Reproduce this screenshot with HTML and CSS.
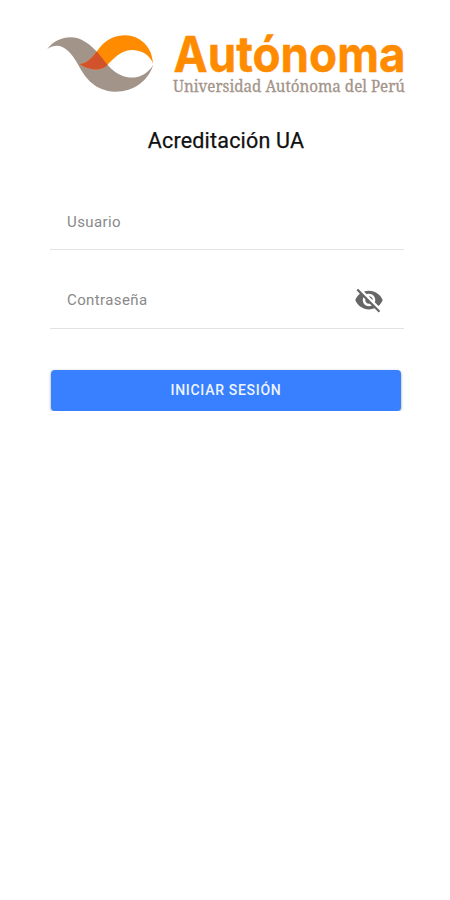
FILE: index.html
```html
<!DOCTYPE html>
<html lang="es">
<head>
<meta charset="utf-8">
<title>Acreditación UA</title>
<link rel="stylesheet" href="styles.css">
</head>
<body>
<main class="login">
  <svg class="logo" viewBox="0 0 370 75" role="img" aria-label="Autónoma">
    <defs>
      <clipPath id="wave"><path d="M22 72C50 35 100 27 135 50C168 70 185 98 205 122C235 154 262 160 288 157C315 151 330 135 340 119C325 165 285 200 225 200C165 198 136 160 115 120C90 74 60 46 22 72Z"/></clipPath>
    </defs>
    <g transform="scale(.33333)">
      <path class="taupe" d="M22 72C50 35 100 27 135 50C168 70 185 98 205 122C235 154 262 160 288 157C315 151 330 135 340 119C325 165 285 200 225 200C165 198 136 160 115 120C90 74 60 46 22 72Z"/>
      <path class="orange" d="M118 117C148 116 163 88 180 67C215 24 268 24 298 43C325 60 337 85 339 116C330 90 305 75 275 75C240 77 220 102 200 122C180 139 145 136 118 117Z"/>
      <path class="red" clip-path="url(#wave)" d="M118 117C148 116 163 88 180 67C215 24 268 24 298 43C325 60 337 85 339 116C330 90 305 75 275 75C240 77 220 102 200 122C180 139 145 136 118 117Z"/>
    </g>
    <text class="wordmark" x="133.5" y="47" textLength="232" lengthAdjust="spacingAndGlyphs">Autónoma</text>
    <text class="tagline" x="133" y="67.3" textLength="232" lengthAdjust="spacingAndGlyphs">Universidad Autónoma del Perú</text>
  </svg>
  <h1 class="title">Acreditación UA</h1>
  <form class="form">
    <div class="field">
      <input class="input" type="text" placeholder="Usuario" aria-label="Usuario">
    </div>
    <div class="field">
      <input class="input" type="password" placeholder="Contraseña" aria-label="Contraseña">
      <svg class="eye" viewBox="0 0 24 24"><path d="M12 7c2.76 0 5 2.24 5 5 0 .65-.13 1.26-.36 1.83l2.92 2.92c1.51-1.26 2.7-2.89 3.43-4.75-1.73-4.39-6-7.5-11-7.5-1.4 0-2.74.25-3.98.7l2.16 2.16C10.74 7.13 11.35 7 12 7zM2 4.27l2.28 2.28.46.46C3.08 8.3 1.78 10.02 1 12c1.73 4.39 6 7.5 11 7.5 1.55 0 3.03-.3 4.38-.84l.42.42L19.73 22 21 20.73 3.27 3 2 4.27zM7.53 9.8l1.55 1.55c-.05.21-.08.43-.08.65 0 1.66 1.34 3 3 3 .22 0 .44-.03.65-.08l1.55 1.55c-.67.33-1.41.53-2.2.53-2.76 0-5-2.24-5-5 0-.79.2-1.53.53-2.2zm4.31-.78l3.15 3.15.02-.16c0-1.66-1.34-3-3-3l-.17.01z"/></svg>
    </div>
    <button class="submit" type="button">INICIAR SESIÓN</button>
  </form>
</main>
</body>
</html>
```
FILE: styles.css
```css
* { box-sizing: border-box; }
body {
  margin: 0;
  background: #fff;
  font-family: Roboto, sans-serif;
}
.login { padding: 25px 46px 0 50px; }
.logo {
  display: block;
  width: 370px;
  height: 75px;
  margin-left: -10px;
  overflow: visible;
}
.taupe { fill: #a3948a; }
.orange { fill: #ff8c00; }
.red { fill: #d2522b; }
.wordmark {
  fill: #ff8c00;
  stroke: #ff8c00;
  stroke-width: .5px;
  font: 700 50px Inter, sans-serif;
}
.tagline {
  fill: #a3948a;
  stroke: #a3948a;
  stroke-width: .3px;
  font: 400 15.5px "Noto Serif", "Liberation Serif", serif;
}
.title {
  margin: 26px 0 0;
  padding-right: 2px;
  text-align: center;
  font-size: 21.5px;
  font-weight: 400;
  line-height: 29px;
  letter-spacing: .2px;
  color: #111;
  -webkit-text-stroke: .25px #111;
}
.form { margin-top: 40px; }
.field {
  display: flex;
  align-items: center;
  height: 55px;
  padding: 0 20px 0 17px;
  border-bottom: 1px solid #e2e2e2;
}
.field + .field { height: 57px; margin-top: 22px; }
.input {
  flex: 1;
  min-width: 0;
  padding: 0;
  border: 0;
  outline: 0;
  background: none;
  font: 400 15px/20px Roboto, sans-serif;
  letter-spacing: .4px;
}
.input::placeholder { color: #898989; opacity: 1; }
.eye { width: 30px; height: 30px; fill: #666; }
.submit {
  display: block;
  width: 350px;
  height: 41px;
  margin: 41px 0 0 1px;
  padding: 0 0 1px;
  border: 0;
  border-radius: 4px;
  background: #3880ff;
  box-shadow: 0 1px 3px rgba(0, 0, 0, .4);
  color: #eef4ff;
  font: 500 14px/38px Roboto, sans-serif;
  letter-spacing: .7px;
}
```
